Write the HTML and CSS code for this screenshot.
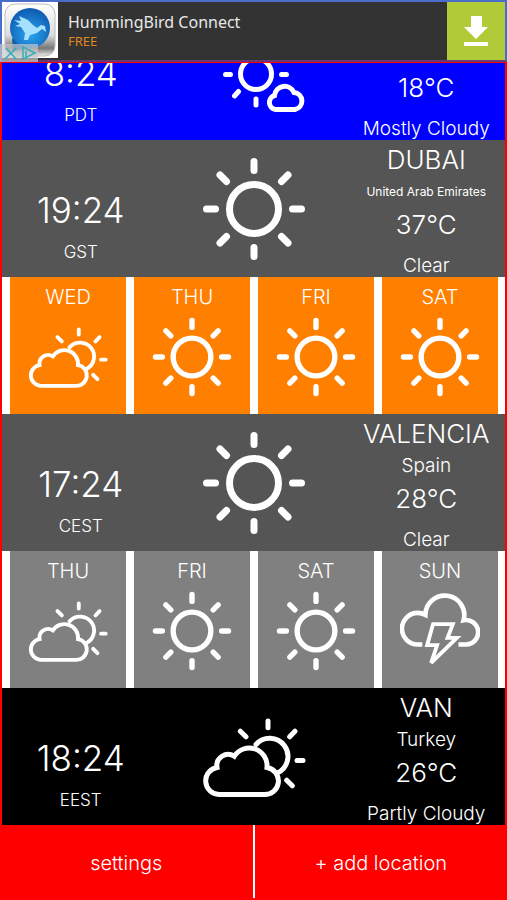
FILE: index.html
```html
<!doctype html>
<html lang="en">
  <head>
    <meta charset="UTF-8" />
    <meta name="viewport" content="width=device-width, initial-scale=1.0" />
    <title>World Weather</title>
    <link rel="stylesheet" href="styles.css">
  </head>
  <body>
    <!-- Icon sprite -->
    <svg class="sprite" aria-hidden="true">
      <symbol id="sun" viewBox="0 0 104 104">
        <circle cx="52" cy="52" r="24.5" />
        <path d="M52 4.500V13.500M52 90.500V99.500M4.500 52H13.500M90.500 52H99.500M18 18l6.500 6.500M79.500 79.500l6.500 6.500M86 18l-6.500 6.500M24.500 79.500L18 86" />
      </symbol>
      <symbol id="partly-cloudy" viewBox="0 0 104 104">
        <path d="M17 89.500A13.600 13.600 0 0 1 15 62.500A11.300 11.300 0 0 1 32.300 51.200A17.800 17.800 0 0 1 65 62.500A13.600 13.600 0 0 1 62 89.500Z" />
        <path d="M54 39.500A18.200 18.200 0 1 1 75.300 68" />
        <path d="M66 16V22.700M95 55.500H101M87.700 31.800L93 26.200M38.300 26.200L44 31.800M84.700 75.200L90.300 80.800" />
      </symbol>
      <symbol id="mostly-cloudy" viewBox="0 0 104 104">
        <circle cx="54" cy="54" r="15.500" />
        <path d="M23.500 54.500H28.500M79.500 54.500H84.500M54 79V85M54 23V29M32.500 76L36.500 71.500M32.500 33L36.500 37M75.500 33L71.500 37" />
        <path d="M73.500 89.500A7.200 7.200 0 0 1 72.500 75.500A10.200 10.200 0 0 1 92 72.500A8.600 8.600 0 0 1 93 89.500Z" />
      </symbol>
      <symbol id="storm" viewBox="0 0 104 104">
        <path class="butt" d="M29 69.500H23A20.500 20.500 0 0 1 23 28.500Q28 28.500 33 31A25.300 25.300 0 1 1 82.700 38A15.900 15.900 0 1 1 86 69.500H76" />
        <path class="bolt" d="M43 43H68.700L61.800 61H73.800L40.500 93.400L48.200 70.400H35.300Z" />
      </symbol>
    </svg>

    <a class="banner" href="#">
      <span class="banner-icon">
        <svg viewBox="0 0 56 56" aria-hidden="true">
          <defs>
            <linearGradient id="frame" x1="0" y1="0" x2="0" y2="1">
              <stop offset="0" stop-color="#fff" />
              <stop offset="0.600" stop-color="#ddd" />
              <stop offset="0.850" stop-color="#777" />
              <stop offset="1" stop-color="#eee" />
            </linearGradient>
            <radialGradient id="ball" cx="0.500" cy="0.650" r="0.600">
              <stop offset="0" stop-color="#2aa5ee" />
              <stop offset="1" stop-color="#0f5fb4" />
            </radialGradient>
          </defs>
          <rect width="56" height="56" fill="#fff" />
          <rect x="3" y="2" width="50" height="52" rx="10" fill="url(#frame)" stroke="#bbb" />
          <path d="M10 36l1 14 14-5z" fill="#0f5fa5" />
          <circle cx="28" cy="26" r="20" fill="url(#ball)" />
          <path d="M17 14l9 4 5 5 4 3 4-3 4 1 1 6-4-3-5 4-7 2-2 5-4 0 1-7-4-6-6-1 5-2-6-4 7 1z" fill="#a5e0ff" />
        </svg>
      </span>
      <span class="ad-choices">
        <svg viewBox="0 0 38 18" aria-hidden="true">
          <path d="M6 4l10 11M16 4L5 15" />
          <path d="M23 3v12l12-6zM26 7v6" />
        </svg>
      </span>
      <span class="banner-text">
        <span class="banner-title">HummingBird Connect</span>
        <span class="banner-price">FREE</span>
      </span>
      <span class="download">
        <svg viewBox="0 0 24 30" aria-hidden="true">
          <path d="M7 0h11v11h6L12 23 0 11h7zM0 26h24v4H0z" />
        </svg>
      </span>
    </a>

    <main class="list">
      <section class="location blue">
        <div class="clock">
          <span class="time">8:24</span>
          <span class="zone">PDT</span>
        </div>
        <svg class="icon"><use href="#mostly-cloudy" /></svg>
        <div class="info">
          <span class="temp">18°C</span>
          <span class="condition">Mostly Cloudy</span>
        </div>
      </section>

      <section class="location">
        <div class="clock">
          <span class="time">19:24</span>
          <span class="zone">GST</span>
        </div>
        <svg class="icon"><use href="#sun" /></svg>
        <div class="info">
          <h2>DUBAI</h2>
          <span class="country long">United Arab Emirates</span>
          <span class="temp">37°C</span>
          <span class="condition">Clear</span>
        </div>
      </section>

      <div class="forecast orange">
        <div class="day"><span>WED</span><svg class="icon"><use href="#partly-cloudy" /></svg></div>
        <div class="day"><span>THU</span><svg class="icon"><use href="#sun" /></svg></div>
        <div class="day"><span>FRI</span><svg class="icon"><use href="#sun" /></svg></div>
        <div class="day"><span>SAT</span><svg class="icon"><use href="#sun" /></svg></div>
      </div>

      <section class="location">
        <div class="clock">
          <span class="time">17:24</span>
          <span class="zone">CEST</span>
        </div>
        <svg class="icon"><use href="#sun" /></svg>
        <div class="info">
          <h2>VALENCIA</h2>
          <span class="country">Spain</span>
          <span class="temp">28°C</span>
          <span class="condition">Clear</span>
        </div>
      </section>

      <div class="forecast">
        <div class="day"><span>THU</span><svg class="icon"><use href="#partly-cloudy" /></svg></div>
        <div class="day"><span>FRI</span><svg class="icon"><use href="#sun" /></svg></div>
        <div class="day"><span>SAT</span><svg class="icon"><use href="#sun" /></svg></div>
        <div class="day"><span>SUN</span><svg class="icon"><use href="#storm" /></svg></div>
      </div>

      <section class="location black">
        <div class="clock">
          <span class="time">18:24</span>
          <span class="zone">EEST</span>
        </div>
        <svg class="icon"><use href="#partly-cloudy" /></svg>
        <div class="info">
          <h2>VAN</h2>
          <span class="country">Turkey</span>
          <span class="temp">26°C</span>
          <span class="condition">Partly Cloudy</span>
        </div>
      </section>
    </main>

    <footer class="actions">
      <button type="button">settings</button>
      <button type="button">+ add location</button>
    </footer>
  </body>
</html>
```
FILE: styles.css
```css
* {
  box-sizing: border-box;
}

body {
  margin: 0;
  height: 100vh;
  display: flex;
  flex-direction: column;
  background-color: #ff0000;
  color: #fff;
  font-family: Inter, "Liberation Sans", sans-serif;
  font-weight: 300;
}

.sprite {
  position: absolute;
  width: 0;
  height: 0;
}

/* Ad banner */
.banner {
  position: relative;
  flex: none;
  display: flex;
  height: 62px;
  border: 2px solid #4a6ccb;
  border-bottom-color: #683a78;
  background-color: #333;
  color: #e8e8e8;
  font-family: "Noto Sans", "Open Sans", sans-serif;
  font-weight: 400;
  text-decoration: none;
}

.banner-icon {
  width: 56px;
  height: 56px;
}

.banner-icon svg,
.ad-choices svg {
  display: block;
}

.ad-choices {
  position: absolute;
  left: -2px;
  bottom: -2px;
  width: 38px;
  height: 18px;
  background-color: rgba(200, 200, 200, 0.7);
}

.ad-choices svg {
  fill: none;
  stroke: #35aebb;
  stroke-width: 1.5;
}

.banner-text {
  flex: 1;
  display: flex;
  flex-direction: column;
  padding: 9px 10px;
}

.banner-title {
  font-size: 16px;
  line-height: 22px;
}

.banner-price {
  color: #e08a1e;
  font-size: 13px;
  line-height: 16px;
}

.download {
  display: flex;
  justify-content: center;
  align-items: center;
  width: 58px;
  background-color: #b0cb37;
}

.download svg {
  width: 24px;
  height: 30px;
  fill: #fff;
}

/* Scrolled list, pinned to its last row */
.list {
  flex: 1;
  min-height: 0;
  display: flex;
  flex-direction: column;
  justify-content: flex-end;
  overflow: hidden;
  border: 2px solid #ff0000;
  border-width: 1px 2px 0;
}

.location {
  flex: none;
  display: grid;
  grid-template-columns: 1fr 188px 1fr;
  height: 137px;
  background-color: #555;
}

.location.blue {
  background-color: #0000ff;
}

.location.black {
  background-color: #000;
}

.clock {
  display: flex;
  flex-direction: column;
  align-items: center;
  gap: 10px;
  padding-top: 50px;
}

.time {
  font-size: 35px;
  line-height: 40px;
}

.zone {
  font-size: 17px;
  line-height: 24px;
}

.icon {
  width: 104px;
  height: 104px;
  fill: none;
  stroke: #fff;
  stroke-width: 5;
  stroke-linecap: round;
}

#sun {
  stroke-width: 7;
}

.butt {
  stroke-width: 6;
  stroke-linecap: butt;
}

.bolt {
  stroke-width: 5;
}

.location .icon {
  place-self: center;
}

.info {
  display: flex;
  flex-direction: column;
  justify-content: flex-end;
  align-items: center;
  white-space: nowrap;
}

.info h2 {
  margin: 0;
  font-size: 26px;
  font-weight: 300;
  line-height: 38px;
}

.country {
  font-size: 19px;
  line-height: 26px;
}

.country.long {
  font-size: 12px;
  font-weight: 400;
}

.temp {
  font-size: 26px;
  line-height: 40px;
}

.condition {
  margin-top: 10px;
  font-size: 19px;
  line-height: 22px;
}

/* Four day forecast */
.forecast {
  flex: none;
  display: grid;
  grid-template-columns: repeat(4, 1fr);
  gap: 8px;
  height: 137px;
  padding: 0 7px 0 8px;
  background-color: #fff;
}

.day {
  display: flex;
  flex-direction: column;
  align-items: center;
  background-color: #808080;
  font-size: 20px;
  line-height: 40px;
}

.orange .day {
  background-color: #ff8000;
}

.day .icon {
  width: 80px;
  height: 80px;
}

/* Bottom buttons */
.actions {
  flex: none;
  display: flex;
  height: 75px;
  padding-bottom: 2px;
}

.actions button {
  flex: 1;
  padding: 2px 0 0;
  border: none;
  background-color: #ff0000;
  color: #fff;
  font: inherit;
  font-size: 20px;
  cursor: pointer;
}

.actions button + button {
  border-left: 2px solid #fff;
}
```
